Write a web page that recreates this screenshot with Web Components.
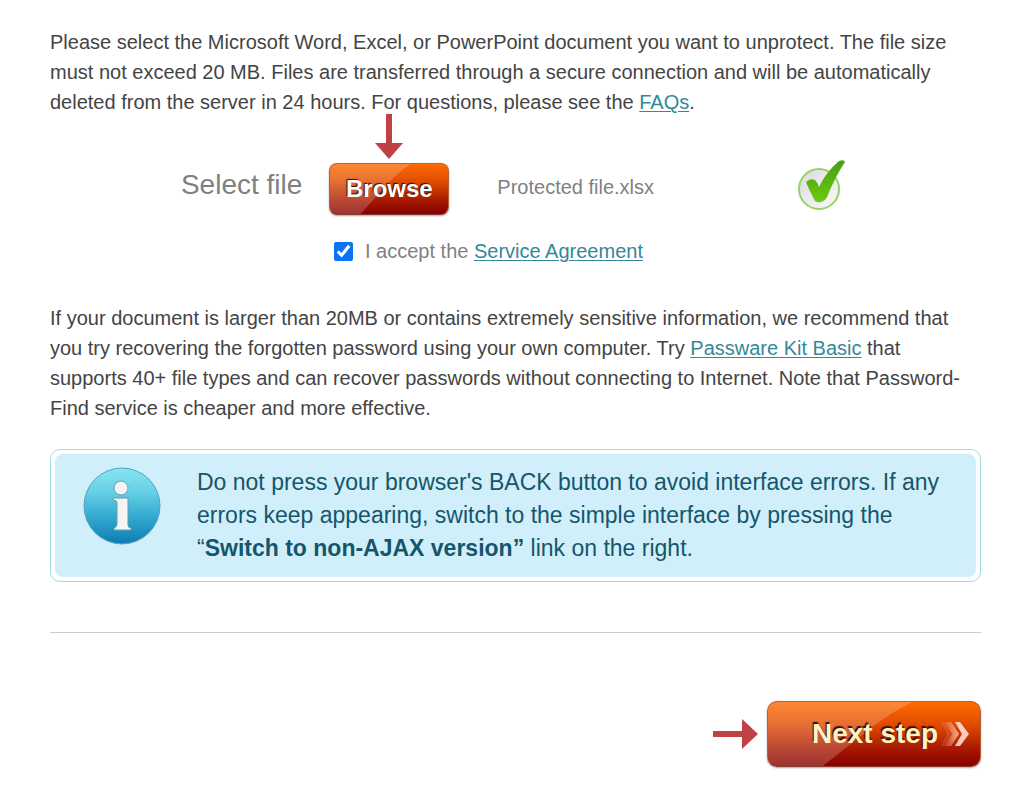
<!DOCTYPE html>
<html lang="en">
<head>
<meta charset="utf-8">
<meta name="viewport" content="width=device-width, initial-scale=1">
<title>Select file</title>
<style>
body {
  margin: 0;
  background: #fff;
  color: #444;
  font: 20px/30px "Liberation Sans", Arial, sans-serif;
}

a {
  color: #338899;
  text-decoration-thickness: 1px;
  text-underline-offset: 2px;
}

p {
  margin: 0;
}
</style>
</head>
<body>

<unprotect-page>
  <p>Please select the Microsoft Word, Excel, or PowerPoint document you want to unprotect. The file size must not exceed 20 MB. Files are transferred through a secure connection and will be automatically deleted from the server in 24 hours. For questions, please see the <a href="#faqs">FAQs</a>.</p>

  <file-picker label="Select file" file="Protected file.xlsx"></file-picker>

  <accept-terms>I accept the <a href="#agreement">Service Agreement</a></accept-terms>

  <p>If your document is larger than 20MB or contains extremely sensitive information, we recommend that you try recovering the forgotten password using your own computer. Try <a href="#kit">Passware Kit Basic</a> that supports 40+ file types and can recover passwords without connecting to Internet. Note that Password-Find service is cheaper and more effective.</p>

  <info-note>Do not press your browser's BACK button to avoid interface errors. If any errors keep appearing, switch to the simple interface by pressing the “<b>Switch to non-AJAX version”</b> link on the right.</info-note>

  <step-footer></step-footer>
</unprotect-page>

<script>
function define(name, html, setup) {
  const template = document.createElement('template')
  template.innerHTML = html

  customElements.define(name, class extends HTMLElement {
    constructor() {
      super()
      this.attachShadow({ mode: 'open' }).appendChild(template.content.cloneNode(true))
    }

    connectedCallback() {
      if (setup) setup(this, this.shadowRoot)
    }
  })
}

/* Page column */
define('unprotect-page', `
<style>
:host {
  display: block;
  padding: 27px 43px 24px 50px;
}
</style>
<slot></slot>
`)

/* Glossy orange button, size="large" adds the double chevron */
define('glossy-button', `
<style>
:host {
  display: block;
}

button {
  position: relative;
  display: flex;
  align-items: center;
  justify-content: center;
  width: 100%;
  height: 52px;
  padding: 0;
  overflow: hidden;
  border: 1px solid #b9622f;
  border-bottom-color: #8a3a30;
  border-radius: 8px;
  background: linear-gradient(#ff6a00, #e04c00 35%, #a81a00 72%, #860000);
  box-shadow: 0 1px 2px rgba(0,0,0,.35);
  color: #fff;
  font: bold 24px/30px "Liberation Sans", Arial, sans-serif;
  text-shadow: -1px -1px 1px #3a0a00;
  cursor: pointer;
}

.shine {
  position: absolute;
  inset: 0;
  width: 100%;
  height: 100%;
}

.text {
  position: relative;
}

.chevrons {
  display: none;
  position: relative;
}

:host([size="large"]) button {
  height: 66px;
  justify-content: flex-end;
  gap: 3px;
  padding-right: 11px;
  border-radius: 10px;
  color: #fff3c4;
  font-size: 28px;
  text-shadow: -1px -2px 1px #3a0a00;
}

:host([size="large"]) .chevrons {
  display: block;
}
</style>
<button type="button">
  <svg class="shine" viewBox="0 0 120 52" preserveAspectRatio="none" aria-hidden="true">
    <path d="M0 0H82C64 12 51 30 31 52H0Z" fill="#fff" fill-opacity=".2"/>
  </svg>
  <span class="text"><slot></slot></span>
  <svg class="chevrons" width="28" height="28" viewBox="0 0 28 28" aria-hidden="true">
    <defs>
      <linearGradient id="fade" x1="0" x2="1">
        <stop offset="0" stop-color="#ffc9b8" stop-opacity=".1"/>
        <stop offset="1" stop-color="#ffc9b8" stop-opacity=".8"/>
      </linearGradient>
    </defs>
    <path d="M0 2h3l7 12-7 12H0l6-12z" fill="#ffc9b8" fill-opacity=".15"/>
    <path d="M3 2h7l8 12-8 12H3l8-12z" fill="url(#fade)"/>
    <path d="M14 2h5l9 12-9 12h-5l7-12z" fill="#ffdcd4" fill-opacity=".9"/>
  </svg>
</button>
`)

/* Red pointer arrow, dir="down" or "right" */
define('red-arrow', `
<style>
:host {
  display: block;
  width: 46px;
  height: 30px;
}

:host([dir="down"]) {
  width: 30px;
  height: 46px;
}

svg {
  display: block;
}
</style>
<svg aria-hidden="true"><path fill="#c04144"/></svg>
`, (el, root) => {
  const down = el.getAttribute('dir') === 'down'
  const svg = root.querySelector('svg')
  svg.setAttribute('width', down ? 30 : 46)
  svg.setAttribute('height', down ? 46 : 30)
  root.querySelector('path').setAttribute('d', down
    ? 'M12 0h6v29h11L15 45 1 29h11z'
    : 'M0 12h29V0l16 15-16 15V18H0z')
})

define('file-picker', `
<style>
:host {
  display: grid;
  grid-template-columns: minmax(130px, 1fr) 120px minmax(220px, 2fr);
  column-gap: 27px;
  align-items: center;
  margin-top: 40px;
  color: #808080;
}

.label {
  font-size: 28px;
  line-height: 36px;
  padding-bottom: 6px;
  text-align: right;
}

.action {
  position: relative;
  padding: 6px 0 3px;
}

red-arrow {
  position: absolute;
  left: 45px;
  bottom: 58px;
}

.result {
  display: grid;
  grid-template-columns: 300fr 183fr;
  align-items: center;
  padding-left: 21px;
}

.name {
  padding-bottom: 2px;
}

.ok {
  display: block;
  padding-bottom: 4px;
}
</style>
<div class="label"></div>
<div class="action">
  <glossy-button>Browse</glossy-button>
  <red-arrow dir="down"></red-arrow>
</div>
<div class="result">
  <span class="name"></span>
  <svg class="ok" width="48" height="52" viewBox="0 0 48 52" role="img" aria-label="File selected">
    <defs>
      <linearGradient id="tick" x1="0" y1="0" x2="0" y2="1">
        <stop offset="0" stop-color="#4a9e14"/>
        <stop offset="1" stop-color="#6cc913"/>
      </linearGradient>
      <linearGradient id="disc" x1="0" y1="0" x2="1" y2="1">
        <stop offset="0" stop-color="#d9dbdd"/>
        <stop offset="1" stop-color="#fafafa"/>
      </linearGradient>
    </defs>
    <circle cx="21" cy="29" r="20" fill="url(#disc)" stroke="#94d465" stroke-width="2"/>
    <path d="M8 22q4-4 9-2 3 3 4 7Q28 12 41 1q5-2 6 1Q37 17 29 37q-2 4-6 5-6 1-7-3Q11 30 8 22z" fill="url(#tick)"/>
  </svg>
</div>
`, (el, root) => {
  root.querySelector('.label').textContent = el.getAttribute('label')
  root.querySelector('.name').textContent = el.getAttribute('file')
})

define('accept-terms', `
<style>
:host {
  display: block;
  margin: 18px 0 37px;
  padding-left: 284px;
  color: #808080;
}

label {
  display: flex;
  align-items: center;
  gap: 12px;
}

input {
  width: 19px;
  height: 19px;
  margin: 0;
  accent-color: #0b74f5;
}
</style>
<label><input type="checkbox" checked><span><slot></slot></span></label>
`)

define('info-note', `
<style>
:host {
  display: block;
  margin-top: 26px;
  padding: 4px;
  border: 1px solid #9fdde6;
  border-radius: 10px;
}

.box {
  display: flex;
  align-items: flex-start;
  gap: 35px;
  padding: 12px 24px 12px 27px;
  border-radius: 8px;
  background: #d1effa;
  color: #14566b;
  font-size: 23px;
  line-height: 33px;
}

svg {
  flex: none;
}
</style>
<div class="box">
  <svg width="80" height="80" viewBox="0 0 80 80" aria-hidden="true">
    <defs>
      <linearGradient id="ball" x1="0" y1="0" x2="0" y2="1">
        <stop offset="0" stop-color="#86e6f2"/>
        <stop offset=".3" stop-color="#68d1e5"/>
        <stop offset=".65" stop-color="#32a9d0"/>
        <stop offset="1" stop-color="#0d7bb0"/>
      </linearGradient>
    </defs>
    <circle cx="40" cy="40" r="38" fill="url(#ball)" stroke="#4fa5be" stroke-width="1"/>
    <g fill="#f4f4f4" stroke="#5f9fb2" stroke-width="1">
      <circle cx="39" cy="22" r="7"/>
      <path d="M31 32h15v27q0 3 3 3v2H32v-2q3-1 3-4V37q0-3-4-3z"/>
    </g>
  </svg>
  <div><slot></slot></div>
</div>
`)

define('step-footer', `
<style>
:host {
  display: block;
  margin-top: 50px;
  padding-top: 68px;
  border-top: 1px solid #ccc;
}

.actions {
  display: flex;
  align-items: center;
  justify-content: flex-end;
  gap: 8px;
}

glossy-button {
  width: 214px;
}
</style>
<div class="actions">
  <red-arrow></red-arrow>
  <glossy-button size="large">Next step</glossy-button>
</div>
`)
</script>
</body>
</html>
